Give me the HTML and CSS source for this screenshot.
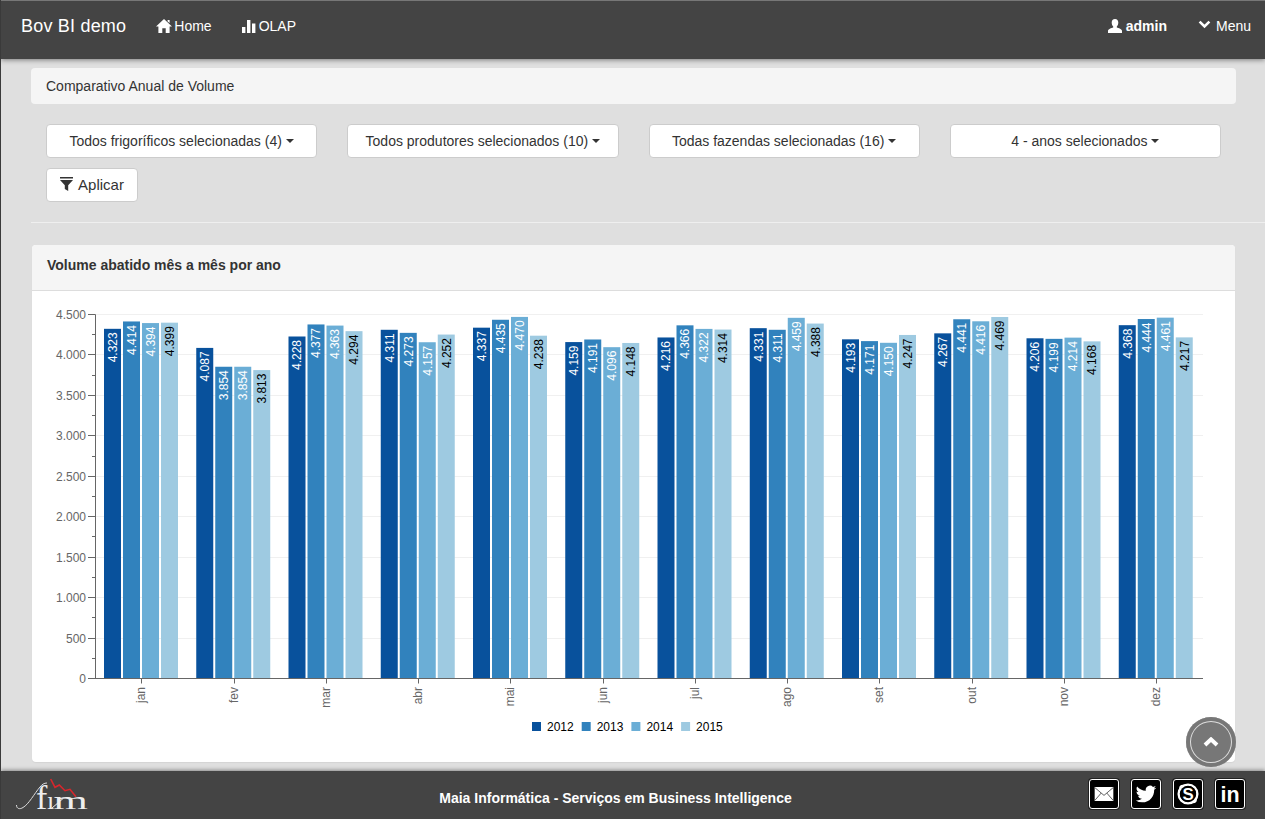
FILE: index.html
```html
<!DOCTYPE html>
<html lang="pt-BR">
<head>
<meta charset="utf-8">
<title>Bov BI demo</title>
<link rel="stylesheet" href="styles.css">
</head>
<body>
<header class="navbar">
  <a class="brand">Bov BI demo</a>
  <nav class="nav">
    <a class="nav-link"><svg class="ico ico-home" viewBox="0 0 16 14"><path d="M8 0 L16 7.5 H13.6 V14 H9.7 V9.2 H6.3 V14 H2.4 V7.5 H0 Z M11.6 1 H13.6 V4 L11.6 2.4 Z"/></svg>Home</a>
    <a class="nav-link"><svg class="ico ico-stats" viewBox="0 0 14 14"><rect x="0" y="8" width="3.4" height="6"/><rect x="5" y="1" width="3.4" height="13"/><rect x="10" y="4.5" width="3.4" height="9.5"/></svg>OLAP</a>
  </nav>
  <nav class="nav nav-right">
    <a class="nav-link nav-user"><svg class="ico ico-user" viewBox="0 0 14 14"><path d="M7 0 C9.2 0 10.3 1.6 10.3 3.6 C10.3 5.4 9.6 6.8 8.8 7.6 V8.6 C10.6 9.3 14 10 14 12 V14 H0 V12 C0 10 3.4 9.3 5.2 8.6 V7.6 C4.4 6.8 3.7 5.4 3.7 3.6 C3.7 1.6 4.8 0 7 0 Z"/></svg>admin</a>
    <a class="nav-link"><svg class="ico ico-chev" viewBox="0 0 13 9"><path d="M1.600 1.600 L6.500 6.400 L11.400 1.600" /></svg>Menu</a>
  </nav>
</header>

<main class="content">
  <div class="breadcrumb">Comparativo Anual de Volume</div>
  <div class="filters">
    <button class="btn">Todos frigoríficos selecionadas (4)<span class="caret"></span></button>
    <button class="btn">Todos produtores selecionados (10)<span class="caret"></span></button>
    <button class="btn">Todas fazendas selecionadas (16)<span class="caret"></span></button>
    <button class="btn">4 - anos selecionados<span class="caret"></span></button>
    <button class="btn btn-apply"><svg class="ico-filter" viewBox="0 0 13 14"><path d="M0 0 H13 V1.600 H0 Z M0 3 H13 L8.200 8.200 V14 L4.800 12 V8.200 Z"/></svg>Aplicar</button>
  </div>
  <hr class="divider">
  <section class="panel">
    <h3 class="panel-heading">Volume abatido mês a mês por ano</h3>
    <div class="panel-body">
      <svg id="chart" class="chart" viewBox="32 291 1203 471" xmlns="http://www.w3.org/2000/svg"></svg>
    </div>
  </section>
</main>

<a class="scroll-top"><svg viewBox="0 0 16 10"><path d="M2 8 L8 2.400 L14 8"/></svg></a>

<footer class="footer">
  <svg class="logo" viewBox="0 0 72 34">
    <path class="logo-tail" d="M0.500 27 C0.500 31 4 31.500 7 29.500 C13 26 18 16 24 9 C26 6.500 28 5 31 5"/>
    <text class="logo-text" x="20" y="31">f</text>
    <text class="logo-text logo-i" x="31" y="31">ı</text>
    <text class="logo-text logo-m" transform="translate(37.500 31) scale(1.700 1)">m</text>
    <path class="logo-line" d="M35.700 30.300 L47.300 20.300"/>
    <path class="logo-red" d="M34.700 1 L39 9.300 L43.300 7 L49 12.700 L54 11.300 L60 18.700"/>
  </svg>
  <p class="footer-text">Maia Informática - Serviços em Business Intelligence</p>
  <div class="social">
    <a class="social-btn"><svg viewBox="0 0 30 30"><rect class="fill-w" x="5" y="7.500" width="20" height="15"/><path class="mail-line" d="M5 8 L15 16.500 L25 8 M5 22 L12 14 M25 22 L18 14"/></svg></a>
    <a class="social-btn"><svg viewBox="0 0 24 24"><path class="fill-w" transform="translate(3.200 3.200) scale(.733)" d="M23.953 4.57a10 10 0 01-2.825.775 4.958 4.958 0 002.163-2.723c-.951.555-2.005.959-3.127 1.184a4.92 4.92 0 00-8.384 4.482C7.69 8.095 4.067 6.13 1.64 3.162a4.822 4.822 0 00-.666 2.475c0 1.71.87 3.213 2.188 4.096a4.904 4.904 0 01-2.228-.616v.06a4.923 4.923 0 003.946 4.827 4.996 4.996 0 01-2.212.085 4.936 4.936 0 004.604 3.417 9.867 9.867 0 01-6.102 2.105c-.39 0-.779-.023-1.17-.067a13.995 13.995 0 007.557 2.209c9.053 0 13.998-7.496 13.998-13.985 0-.21 0-.42-.015-.63A9.935 9.935 0 0024 4.59z"/></svg></a>
    <a class="social-btn"><svg viewBox="0 0 30 30"><circle class="skype-ring" cx="15" cy="15" r="10"/><circle class="fill-w" cx="9.500" cy="9" r="4"/><circle class="fill-w" cx="20.500" cy="21" r="4"/><circle class="fill-k" cx="15" cy="15" r="8.800"/><text class="skype-s" x="15" y="21.500">S</text></svg></a>
    <a class="social-btn"><svg viewBox="0 0 30 30"><text class="linkedin" x="15" y="23.500">in</text></svg></a>
  </div>
</footer>
<script src="chart.js"></script>
</body>
</html>
```

FILE: styles.css
```css
* { box-sizing: border-box; }
html, body { margin: 0; height: 100%; }
body {
  display: flex;
  flex-direction: column;
  height: 819px;
  overflow: hidden;
  background: #dfdfdf;
  border-left: 1px solid #3a3a3a;
  font-family: "Liberation Sans", Arial, sans-serif;
  font-size: 14px;
  line-height: 20px;
  color: #333;
}

/* navbar */
.navbar {
  display: flex;
  align-items: center;
  flex: none;
  height: 59px;
  padding: 0 14px 8px 20px;
  background: #444;
  border-top: 1px solid #777;
  box-shadow: 0 1px 5px rgba(0,0,0,.45);
  color: #fff;
  position: relative;
  z-index: 2;
}
.brand { font-size: 18px; letter-spacing: .2px; margin-right: 30px; }
.nav { display: flex; gap: 30px; }
.nav-right { margin-left: auto; gap: 31px; }
.nav-link { display: flex; align-items: center; }
.nav-user { font-weight: 700; }
.ico { fill: #fff; margin-right: 2px; }
.ico-home { width: 16px; height: 14px; }
.ico-stats { width: 14px; height: 14px; margin-right: 3px; }
.ico-user { width: 14px; height: 14px; margin-right: 4px; }
.ico-chev { width: 13px; height: 9px; margin: -4px 5px 0 0; fill: none; stroke: #fff; stroke-width: 2.6; }

/* main */
.content { flex: 1; min-height: 0; padding: 9px 29px 0 30px; }
.breadcrumb {
  height: 36px;
  padding: 8px 15px;
  background: #f5f5f5;
  border-radius: 4px;
}
.filters {
  display: grid;
  grid-template-columns: repeat(4, 1fr);
  gap: 10px 30px;
  padding: 20px 15px 0;
}
.btn {
  display: flex;
  align-items: center;
  justify-content: center;
  height: 34px;
  padding: 0 12px;
  background: #fff;
  border: 1px solid #ccc;
  border-radius: 4px;
  font: inherit;
  color: #333;
}
.caret {
  width: 0;
  height: 0;
  margin-left: 4px;
  border-top: 4px solid #333;
  border-left: 4px solid transparent;
  border-right: 4px solid transparent;
}
.btn-apply { width: 92px; font-size: 15px; }
.ico-filter { width: 13px; height: 14px; margin: -2px 5px 0 0; fill: #333; }
.divider {
  height: 1px;
  margin: 20px -29px 22px 0;
  border: 0;
  background: #efefef;
}
.panel {
  margin: 0 1px;
  height: 517px;
  background: #fff;
  border-radius: 4px;
  box-shadow: 0 1px 1px rgba(0,0,0,.05);
  overflow: hidden;
}
.panel-heading {
  height: 46px;
  margin: 0;
  padding: 10px 15px;
  background: #f5f5f5;
  border-bottom: 1px solid #ddd;
  font-size: 14px;
  font-weight: 700;
  line-height: 20px;
  color: #333;
}
.panel-body { height: 471px; }
.chart { display: block; width: 1203px; height: 471px; font-size: 12px; }

/* chart */
.grid-line { stroke: #f0f0f0; stroke-width: 1; }
.axis-line { stroke: #666; stroke-width: 1; fill: none; }
.y-label { fill: #666; text-anchor: end; }
.x-label { fill: #666; text-anchor: end; }
.data-label { text-anchor: end; fill: #fff; }
.data-label-dark { fill: #000; }
.legend-text { fill: #000; }
.s0 { fill: #08519c; }
.s1 { fill: #3182bd; }
.s2 { fill: #6baed6; }
.s3 { fill: #9ecae1; }

/* scroll to top */
.scroll-top {
  position: fixed;
  right: 29px;
  top: 717px;
  z-index: 3;
  display: flex;
  align-items: center;
  justify-content: center;
  width: 50px;
  height: 50px;
  border-radius: 50%;
  background: #777;
  box-shadow: inset 0 0 0 4px #777, inset 0 0 0 5px #ddd;
}
.scroll-top svg { width: 16px; height: 10px; fill: none; stroke: #fff; stroke-width: 4; }

/* footer */
.footer {
  display: flex;
  align-items: center;
  flex: none;
  position: relative;
  height: 48px;
  padding: 0 20px 0 15px;
  background: #444;
  box-shadow: 0 -1px 4px rgba(0,0,0,.4);
  color: #fff;
}
.logo { width: 72px; height: 34px; fill: none; overflow: visible; }
.logo-tail { stroke: #ddd; stroke-width: 1; fill: none; }
.logo-text { font-family: "Liberation Serif", serif; font-size: 34px; fill: #eee; }
.logo-i { font-size: 26px; }
.logo-m { font-size: 26px; }
.logo-line { stroke: #eee; stroke-width: 1; }
.logo-red { stroke: #d9262c; stroke-width: 1.600; fill: none; }
.footer-text {
  flex: 1;
  margin: 5px 0 0;
  padding-left: 54px;
  text-align: center;
  font-weight: 700;
}
.social { display: flex; gap: 12px; margin-top: -2px; }
.social-btn {
  display: block;
  width: 30px;
  height: 30px;
  background: #000;
  border: 1px solid #fff;
  border-radius: 3px;
  box-shadow: 0 0 0 1px #222;
  overflow: hidden;
}
.social-btn svg { display: block; width: 100%; height: 100%; }
.fill-w { fill: #fff; }
.fill-k { fill: #000; }
.mail-line { stroke: #555; stroke-width: 1; fill: none; }
.skype-ring { fill: none; stroke: #fff; stroke-width: 2.600; }
.skype-s { fill: #fff; font-size: 18px; font-weight: 700; text-anchor: middle; }
.linkedin { fill: #fff; font-size: 23px; font-weight: 700; text-anchor: middle; }
```

FILE: chart.js
```javascript
(function () {
  var NS = 'http://www.w3.org/2000/svg';
  var svg = document.getElementById('chart');
  var months = ['jan','fev','mar','abr','mai','jun','jul','ago','set','out','nov','dez'];
  var years = ['2012','2013','2014','2015'];
  var data = [
    [4323,4414,4394,4399],[4087,3854,3854,3813],[4228,4377,4363,4294],[4311,4273,4157,4252],
    [4337,4435,4470,4238],[4159,4191,4096,4148],[4216,4366,4322,4314],[4331,4311,4459,4388],
    [4193,4171,4150,4247],[4267,4441,4416,4469],[4206,4199,4214,4168],[4368,4444,4461,4217]
  ];
  var baseY = 678.5, topY = 314.5, left = 95.5, right = 1203;
  var scale = (baseY - topY) / 4500;
  var catW = 92.25, first = 141.3, barW = 17, step = 19;

  function el(name, attrs, text) {
    var n = document.createElementNS(NS, name);
    for (var k in attrs) n.setAttribute(k, attrs[k]);
    if (text !== undefined) n.textContent = text;
    svg.appendChild(n);
    return n;
  }
  function fmt(v) {
    var s = String(v);
    return s.length > 3 ? s.slice(0, -3) + '.' + s.slice(-3) : s;
  }

  for (var v = 0; v <= 4500; v += 250) {
    var y = Math.round(baseY - v * scale - .5) + .5;
    var major = v % 500 === 0;
    if (major) {
      if (v) el('line', { 'class': 'grid-line', x1: left, x2: right, y1: y, y2: y });
      el('text', { 'class': 'y-label', x: 86, y: y + 4 }, fmt(v));
    }
    el('line', { 'class': 'axis-line', x1: major ? 88 : 92, x2: left, y1: y, y2: y });
  }
  el('line', { 'class': 'axis-line', x1: left, x2: left, y1: topY, y2: baseY });

  data.forEach(function (group, m) {
    var c = first + catW * m;
    group.forEach(function (val, s) {
      var x = c - 37.3 + step * s;
      var h = val * scale;
      var t = baseY - h;
      el('rect', { 'class': 's' + s, x: x.toFixed(2), y: t.toFixed(2), width: barW, height: h.toFixed(2) });
      var lx = x + barW / 2 + 4.3, ly = t + 3.5;
      el('text', {
        'class': 'data-label' + (s === 3 ? ' data-label-dark' : ''),
        transform: 'translate(' + lx.toFixed(2) + ' ' + ly.toFixed(2) + ') rotate(-90)'
      }, fmt(val));
    });
    var tx = Math.round(c) + .5;
    el('line', { 'class': 'axis-line', x1: tx, x2: tx, y1: baseY, y2: baseY + 5 });
    el('text', { 'class': 'x-label', transform: 'translate(' + (c + 4) + ' 687) rotate(-90)' }, months[m]);
  });
  el('line', { 'class': 'axis-line', x1: 88, x2: right, y1: baseY, y2: baseY });

  years.forEach(function (yr, i) {
    var x = 532 + 49.7 * i;
    el('rect', { 'class': 's' + i, x: x, y: 722, width: 9, height: 9 });
    el('text', { 'class': 'legend-text', x: x + 15, y: 731 }, yr);
  });
})();
```
